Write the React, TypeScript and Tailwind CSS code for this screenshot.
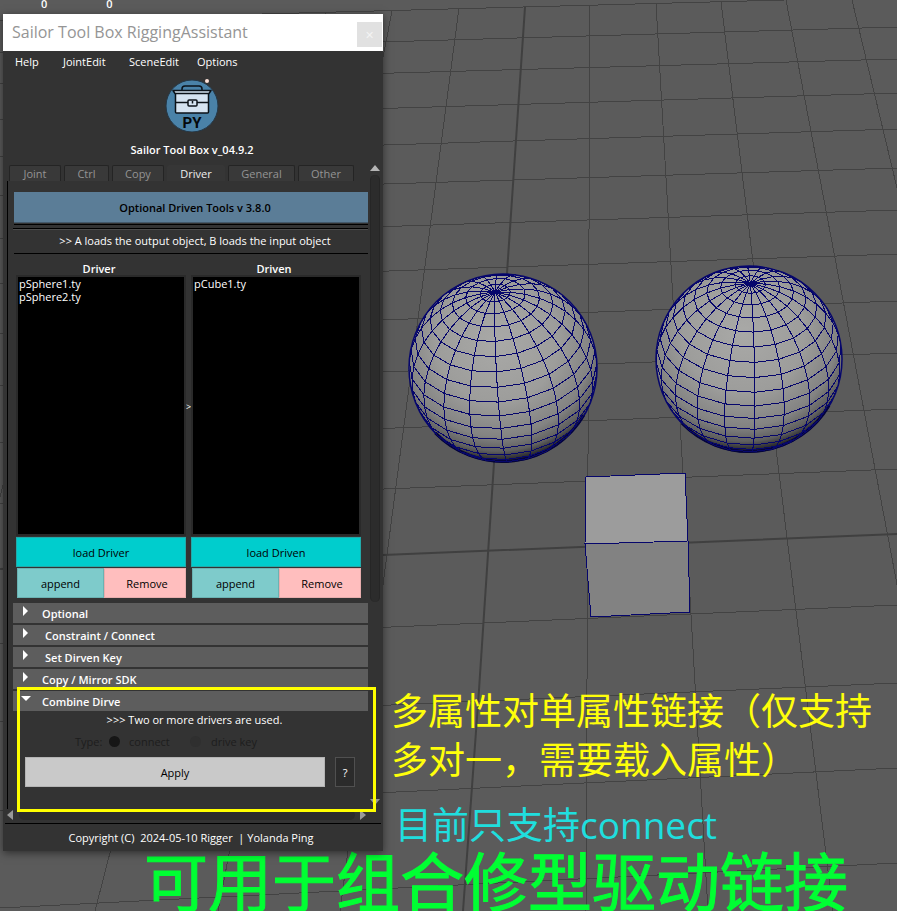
import React, { useState } from "react";

type Point = [number, number];

const GRID_ROWS: [number, number, number, number][] = [
  [0, 21, 785, 0],
  [0, 53, 897, 27],
  [0, 84, 897, 59],
  [0, 120, 897, 93],
  [0, 157, 897, 129],
  [0, 196, 897, 168],
  [0, 239, 897, 210],
  [0, 284, 897, 254],
  [0, 334, 897, 301],
  [0, 386, 897, 353],
  [0, 443, 897, 409],
  [0, 504, 897, 469],
  [0, 644, 897, 605],
  [0, 722, 897, 683],
  [0, 811, 897, 768],
  [0, 908, 897, 863],
];

const GRID_COLUMNS: [number, number, number, number][] = [
  [326, 12, 95, 911],
  [392, 11, 218, 911],
  [459, 8, 340, 911],
  [590, 5, 586, 911],
  [656, 3, 708, 911],
  [721, 2, 833, 911],
  [786, 0, 959, 911],
  [852, 0, 1070, 911],
  [3, 485, -16, 560],
];

const CAMERA_DISTANCE = 20;
const TILT = (38 * Math.PI) / 180;
const DIVISIONS = 20;

interface Vertex {
  screen: Point;
  visible: boolean;
}

function projectVertex(
  lat: number,
  lon: number,
  cx: number,
  cy: number,
  radius: number,
  roll: number,
): Vertex {
  const x = Math.cos(lat) * Math.sin(lon);
  const up = Math.sin(lat);
  const front = Math.cos(lat) * Math.cos(lon);
  const y = up * Math.cos(TILT) - front * Math.sin(TILT);
  const z = up * Math.sin(TILT) + front * Math.cos(TILT);
  const focal = radius * Math.sqrt(CAMERA_DISTANCE ** 2 - 1);
  const px = (focal * x) / (CAMERA_DISTANCE - z);
  const py = (-focal * y) / (CAMERA_DISTANCE - z);
  return {
    screen: [
      cx + px * Math.cos(roll) - py * Math.sin(roll),
      cy + px * Math.sin(roll) + py * Math.cos(roll),
    ],
    visible: z > -0.04,
  };
}

function wireframe(cx: number, cy: number, radius: number, rollDeg: number, phaseDeg: number) {
  const roll = (rollDeg * Math.PI) / 180;
  const vertex = (row: number, column: number) =>
    projectVertex(
      Math.PI / 2 - (row * Math.PI) / DIVISIONS,
      ((phaseDeg + (column * 360) / DIVISIONS) * Math.PI) / 180,
      cx,
      cy,
      radius,
      roll,
    );
  const parts: string[] = [];
  const edge = (a: Vertex, b: Vertex) => {
    if (a.visible && b.visible) {
      parts.push(
        `M${a.screen[0].toFixed(1)} ${a.screen[1].toFixed(1)}L${b.screen[0].toFixed(1)} ${b.screen[1].toFixed(1)}`,
      );
    }
  };
  for (let row = 0; row < DIVISIONS; row++) {
    for (let column = 0; column < DIVISIONS; column++) {
      edge(vertex(row, column), vertex(row + 1, column));
      if (row > 0) edge(vertex(row, column), vertex(row, column + 1));
    }
  }
  return parts.join("");
}

interface SphereProps {
  cx: number;
  cy: number;
  radius: number;
  roll: number;
  phase: number;
}

function Sphere({ cx, cy, radius, roll, phase }: SphereProps) {
  return (
    <g>
      <circle cx={cx} cy={cy} r={radius} fill="url(#sphere-shade)" stroke="#06066c" strokeWidth="1.5" />
      <path
        d={`M${cx - radius * 0.72} ${cy + radius * 0.69}A${radius} ${radius} 0 0 0 ${cx + radius * 0.86} ${cy + radius * 0.5}`}
        fill="none"
        stroke="#04043a"
        strokeWidth="3"
      />
      <path
        d={wireframe(cx, cy, radius, roll, phase)}
        fill="none"
        stroke="#06066c"
        strokeWidth="1"
        shapeRendering="crispEdges"
      />
    </g>
  );
}

function Viewport() {
  return (
    <svg
      className="absolute inset-0 h-full w-full"
      viewBox="0 0 897 911"
      preserveAspectRatio="xMinYMin slice"
      aria-label="Perspective viewport"
    >
      <defs>
        <radialGradient id="sphere-shade" cx="0.47" cy="0.36" r="0.72">
          <stop offset="0" stopColor="#a9a9a7" />
          <stop offset="0.45" stopColor="#9d9d9b" />
          <stop offset="0.7" stopColor="#838382" />
          <stop offset="0.81" stopColor="#5f5f5f" />
          <stop offset="0.88" stopColor="#222226" />
          <stop offset="1" stopColor="#050510" />
        </radialGradient>
      </defs>
      <g stroke="#434343" strokeWidth="1" shapeRendering="crispEdges">
        {[...GRID_ROWS, ...GRID_COLUMNS].map(([x1, y1, x2, y2], i) => (
          <line key={i} x1={x1} y1={y1} x2={x2} y2={y2} />
        ))}
      </g>
      <g stroke="#404040" strokeWidth="2" fill="none">
        <path d="M525 7L507 273L494 463L479 690L463 911" />
        <path d="M0 569L383 555L897 534" />
      </g>
      <Sphere cx={503} cy={368} radius={94} roll={-6} phase={-5} />
      <Sphere cx={749} cy={359} radius={93} roll={1} phase={4} />
      <g stroke="#06066c" strokeWidth="1" shapeRendering="crispEdges">
        <path d="M586 477L685 473L688 541L585 544Z" fill="#9c9c9c" />
        <path d="M585 544L688 541L690 612L591 617Z" fill="#828282" />
      </g>
    </svg>
  );
}

function ToolBoxLogo() {
  return (
    <svg width="54" height="56" viewBox="0 0 54 56" aria-label="Tool box logo">
      <circle cx="27" cy="30" r="26" fill="#4a82a8" stroke="#243746" strokeWidth="1" />
      <circle cx="42" cy="5" r="2" fill="#ffe3da" />
      <g stroke="#0b1219" strokeWidth="1.5" strokeLinejoin="round">
        <path d="M17 15V13Q17 10 20 10H34Q37 10 37 13V15" fill="#4a82a8" />
        <rect x="10.5" y="17" width="33" height="20" rx="1" fill="#d5e3f1" />
        <path d="M8 14.5H46L44 17.5H10Z" fill="#d5e3f1" />
        <path d="M11 26.5H43" />
        <rect x="23" y="24" width="9" height="6" rx="1" fill="#d5e3f1" />
        <path d="M27.5 25V27.5" />
      </g>
      <text
        x="27"
        y="52"
        textAnchor="middle"
        fill="#05080b"
        fontFamily="'Liberation Sans Narrow', Roboto, sans-serif"
        fontSize="15"
        fontWeight="700"
      >
        PY
      </text>
    </svg>
  );
}

const TABS: { name: string; width: string }[] = [
  { name: "Joint", width: "w-[52px]" },
  { name: "Ctrl", width: "w-[45px]" },
  { name: "Copy", width: "w-[52px]" },
  { name: "Driver", width: "w-[58px]" },
  { name: "General", width: "w-[67px]" },
  { name: "Other", width: "w-[56px]" },
];

function Tabs() {
  const [active, setActive] = useState("Driver");
  return (
    <div role="tablist" className="flex h-4 gap-[3px] pl-[2px]">
      {TABS.map(({ name, width }) => (
        <button
          key={name}
          role="tab"
          aria-selected={active === name}
          onClick={() => setActive(name)}
          className={`${width} flex items-center justify-center rounded-t-xs ${
            active === name
              ? "bg-[#363636] text-[#eee]"
              : "border border-b-0 border-[#242424] bg-[#393939] text-[#949494]"
          }`}
        >
          {name}
        </button>
      ))}
    </div>
  );
}

function AttributeColumn({ title, items }: { title: string; items: string[] }) {
  return (
    <section className="flex w-[170px] flex-col">
      <h2 className="h-[14px] pr-1 text-center font-semibold leading-4">{title}</h2>
      <ul className="h-[261px] border-2 border-[#2a2a2a] bg-black pl-px leading-[13px]">
        {items.map((item) => (
          <li key={item}>{item}</li>
        ))}
      </ul>
      <button className="mt-px h-[30px] border border-[#2aa] bg-[#00cdcd] text-black">
        load {title}
      </button>
      <div className="mt-px flex h-[30px] pl-px text-black">
        <button className="w-[87px] border border-[#6ab3b3] bg-[#7ecbcb]">append</button>
        <button className="flex-1 border border-[#e8adad] bg-[#ffbebe] pl-1">Remove</button>
      </div>
    </section>
  );
}

const SECTIONS: { name: string; pad: string }[] = [
  { name: "Optional", pad: "pl-[15px]" },
  { name: "Constraint / Connect", pad: "pl-[18px]" },
  { name: "Set Dirven Key", pad: "pl-[18px]" },
  { name: "Copy / Mirror SDK", pad: "pl-[15px]" },
  { name: "Combine Dirve", pad: "pl-[15px]" },
];

function SectionHeader({ name, pad, open }: { name: string; pad: string; open: boolean }) {
  return (
    <button aria-expanded={open} className="flex h-5 w-full items-start bg-[#5d5d5d] text-left font-semibold">
      <svg width="10" height="14" viewBox="0 0 10 14" className="ml-2 shrink-0" aria-hidden="true">
        <path d={open ? "M0 5H10L5 10Z" : "M2 3L7 8L2 13Z"} fill="#fff" />
      </svg>
      <span className={`${pad} -ml-1 leading-[22px]`}>{name}</span>
    </button>
  );
}

function CombinePanel() {
  return (
    <form className="flex flex-col" onSubmit={(e) => e.preventDefault()}>
      <p className="pl-2 text-center leading-[18px]">&gt;&gt;&gt; Two or more drivers are used.</p>
      <fieldset disabled className="text-[#1d1d1d]">
        <div className="flex h-[25px] items-center pl-[62px]">
          <span className="w-[34px]">Type:</span>
          <input
            id="type-connect"
            type="radio"
            name="type"
            defaultChecked
            className="size-[11px] appearance-none rounded-full bg-[#161616]"
          />
          <label htmlFor="type-connect" className="w-[70px] pl-[9px]">
            connect
          </label>
          <input
            id="type-key"
            type="radio"
            name="type"
            className="size-[11px] appearance-none rounded-full bg-[#2f2f2f]"
          />
          <label htmlFor="type-key" className="pl-[10px]">
            drive key
          </label>
        </div>
      </fieldset>
      <div className="mt-[3px] flex h-[30px] gap-[10px] pl-3">
        <button className="w-[300px] border border-[#b4b4b4] bg-[#c9c9c9] text-black">Apply</button>
        <button className="w-5 border border-[#505050] bg-[#2b2b2b]" aria-label="Help on combine">
          ?
        </button>
      </div>
    </form>
  );
}

function ToolWindow() {
  return (
    <main className="absolute top-[14px] left-[3px] flex w-[380px] flex-col bg-[#333] text-[11px] leading-[15px] text-white shadow-[0_2px_8px_rgba(0,0,0,0.5)]">
      <header className="flex h-[37px] items-center justify-between bg-white pl-[9px]">
        <h1 className="text-[16px] text-[#959595]">Sailor Tool Box RiggingAssistant</h1>
        <button
          aria-label="Close"
          className="mt-[3px] mr-px flex size-[25px] items-center justify-center bg-[#e1e1e1] text-[#f3f3f3]"
        >
          ✕
        </button>
      </header>
      <nav className="flex h-5 items-center gap-[21px] pl-3">
        <button className="w-[27px] text-left">Help</button>
        <button className="w-[45px] text-left">JointEdit</button>
        <button className="w-[47px] text-left">SceneEdit</button>
        <button>Options</button>
      </nav>
      <div className="flex flex-col items-center pt-[5px] pr-[2px]">
        <ToolBoxLogo />
        <p className="mt-[9px] h-[17px] font-semibold leading-[17px]">Sailor Tool Box v_04.9.2</p>
      </div>
      <div className="mt-[7px] flex pl-1">
        <div className="w-[361px]">
          <Tabs />
          <div className="h-[628px] border-l border-black pl-[5px]">
            <div className="pt-[11px]">
              <h2 className="ml-px flex h-[31px] items-center justify-center border-b border-[#44596a] bg-[#5b7d97] pl-2 font-semibold text-black">
                Optional Driven Tools v 3.8.0
              </h2>
              <div className="ml-px h-[2px] border-b border-black" />
              <div className="mt-[3px] h-[2px] border-t border-b border-t-black border-b-[#4c4c4c]" />
              <p className="ml-px h-6 border-b border-black pl-2 text-center leading-[22px]">
                &gt;&gt; A loads the output object, B loads the input object
              </p>
            </div>
            <div className="mt-[7px] flex items-start pl-[3px]">
              <AttributeColumn title="Driver" items={["pSphere1.ty", "pSphere2.ty"]} />
              <span className="w-[5px] pt-[138px] text-[9px]">&gt;</span>
              <AttributeColumn title="Driven" items={["pCube1.ty"]} />
            </div>
            <div className="mt-[5px] flex flex-col gap-[2px]">
              {SECTIONS.map((section, i) => (
                <SectionHeader key={section.name} {...section} open={i === SECTIONS.length - 1} />
              ))}
            </div>
            <CombinePanel />
          </div>
          <div className="flex h-3 items-center justify-between pr-[2px]">
            <svg width="6" height="10" viewBox="0 0 6 10" aria-hidden="true">
              <path d="M6 0V10L0 5Z" fill="#999" />
            </svg>
            <div className="h-[10px] w-[336px] rounded-full bg-[#2b2b2b]" />
            <svg width="6" height="10" viewBox="0 0 6 10" aria-hidden="true">
              <path d="M0 0V10L6 5Z" fill="#999" />
            </svg>
          </div>
        </div>
        <div className="flex w-[13px] flex-col items-center pb-4">
          <svg width="10" height="6" viewBox="0 0 10 6" aria-hidden="true">
            <path d="M0 6H10L5 0Z" fill="#b5b5b5" />
          </svg>
          <div className="mt-1 h-[427px] w-[10px] rounded-full border-x border-[#262626] bg-[#2c2c2c]" />
          <svg width="10" height="6" viewBox="0 0 10 6" className="mt-auto" aria-hidden="true">
            <path d="M0 0H10L5 6Z" fill="#999" />
          </svg>
        </div>
      </div>
      <footer className="mx-[2px] mt-[2px] h-[28px] border-t border-black pr-1 text-center leading-[27px] whitespace-pre">
        Copyright (C)  2024-05-10 Rigger  | Yolanda Ping
      </footer>
    </main>
  );
}

export default function App() {
  return (
    <div className="relative min-h-screen w-full overflow-hidden bg-[#5b5b5b] font-['Open_Sans','Noto_Sans_CJK_SC',sans-serif]">
      <Viewport />
      <div className="absolute -top-1 left-[41px] flex gap-[59px] text-[11px] leading-4 font-semibold text-white">
        <span>0</span>
        <span>0</span>
      </div>
      <p className="absolute top-[850px] left-[144px] text-[64px] leading-[64px] whitespace-nowrap text-[#00ff33] [-webkit-text-stroke:1px_#00ff33]">
        可用于组合修型驱动链接
      </p>
      <ToolWindow />
      <div className="absolute top-[687px] left-[17px] h-[125px] w-[359px] border-[3px] border-[#ffff00]" />
      <p className="absolute top-[686px] left-[391px] text-[37px] leading-[49px] whitespace-nowrap text-[#ffff0a]">
        多属性对单属性链接（仅支持
        <br />
        多对一，需要载入属性）
      </p>
      <p className="absolute top-[800px] left-[395px] text-[37px] leading-[49px] whitespace-nowrap text-[#1fdede]">
        目前只支持connect
      </p>
    </div>
  );
}
